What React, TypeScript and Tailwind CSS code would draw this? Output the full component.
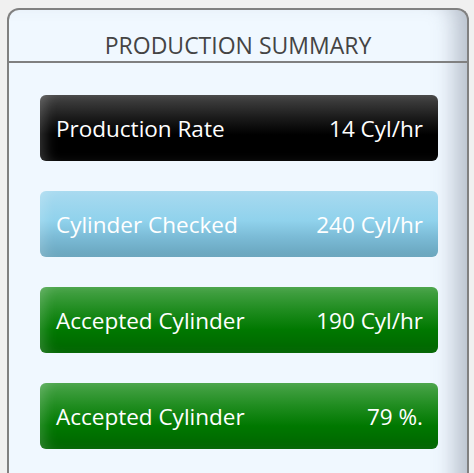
import React from 'react';

const rows = [
  {
    label: 'Production Rate',
    value: '14 Cyl/hr',
    bg: 'bg-[linear-gradient(180deg,#454545_0%,#1a1a1a_35%,#000_60%,#000_100%)]',
    glow: 'shadow-[inset_10px_0_14px_-6px_rgba(255,255,255,0.22)]',
  },
  {
    label: 'Cylinder Checked',
    value: '240 Cyl/hr',
    bg: 'bg-[linear-gradient(180deg,#a8daf0_0%,#90d2ec_45%,#7bbbd6_70%,#68a4bc_100%)]',
    glow: 'shadow-[inset_10px_0_14px_-6px_rgba(255,255,255,0.2)]',
  },
  {
    label: 'Accepted Cylinder',
    value: '190 Cyl/hr',
    bg: 'bg-[linear-gradient(180deg,#49a449_0%,#1f8c1f_35%,#007800_65%,#006400_100%)]',
    glow: 'shadow-[inset_10px_0_14px_-6px_rgba(255,255,255,0.2)]',
  },
  {
    label: 'Accepted Cylinder',
    value: '79 %.',
    bg: 'bg-[linear-gradient(180deg,#49a449_0%,#1f8c1f_35%,#007800_65%,#006400_100%)]',
    glow: 'shadow-[inset_10px_0_14px_-6px_rgba(255,255,255,0.2)]',
  },
];

export default function App() {
  return (
    <div className="w-[474px] h-[473px] overflow-hidden bg-[#f0f0f0] pt-2 pl-[7px] font-['Open_Sans','Noto_Sans',sans-serif]">
      <div className="w-[462px] h-[480px] rounded-t-[12px] border-2 border-b-0 border-[#808080] bg-[#f0f8ff] shadow-[inset_-26px_0_22px_-14px_rgba(80,90,110,0.35)]">
        {/* Header */}
        <div className="h-[53px] border-b-2 border-[#808080] flex items-end justify-center pb-[4px]">
          <h2 className="text-[23px] leading-none text-[#444]">PRODUCTION SUMMARY</h2>
        </div>

        {/* Rows */}
        <div className="flex flex-col gap-[30px] pl-[31px] pr-[29px] pt-[32px]">
          {rows.map((row, i) => (
            <div
              key={i}
              className={`h-[66px] rounded-[6px] flex items-center justify-between pl-4 pr-[15px] pt-[2px] text-white text-[22.5px] ${row.bg} ${row.glow}`}
            >
              <span>{row.label}</span>
              <span>{row.value}</span>
            </div>
          ))}
        </div>
      </div>
    </div>
  );
}
